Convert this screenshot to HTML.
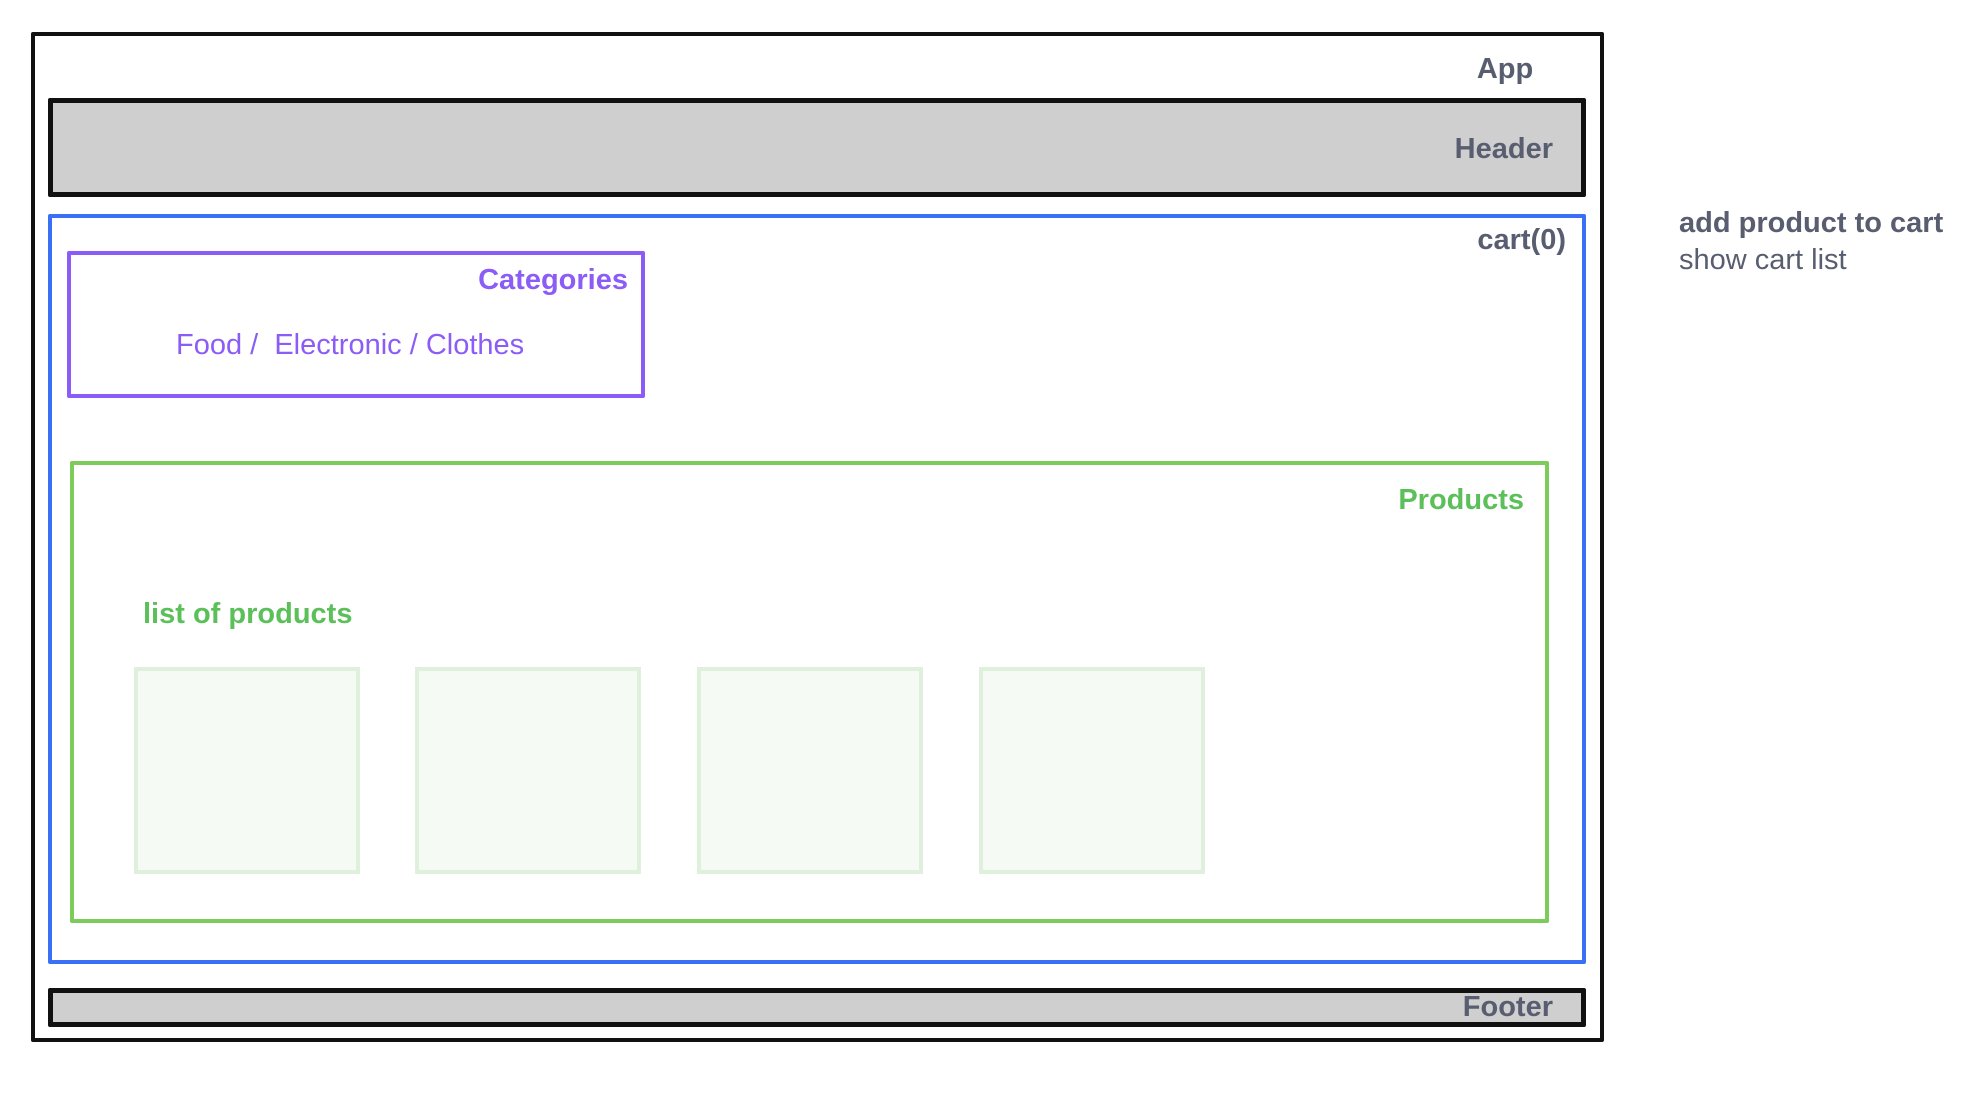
<!DOCTYPE html>
<html><head><meta charset="utf-8"><style>
html,body{margin:0;padding:0;background:#fff;width:1962px;height:1100px;overflow:hidden;position:relative;font-family:"Liberation Sans",sans-serif}
.b{position:absolute;box-sizing:border-box;border-radius:2px}
.t{position:absolute;white-space:nowrap;line-height:1;font-weight:bold;color:#585e70;font-size:29px}
.r{text-align:right}
.card{position:absolute;box-sizing:border-box;border:4px solid #dff0dc;background:#f6faf5;top:667px;height:207px;width:226px}
</style></head><body>
<div class="b" style="left:31px;top:32px;width:1573px;height:1010px;border:4px solid #111"></div>
<div class="t" style="left:1450px;width:110px;text-align:center;top:55px">App</div>
<div class="b" style="left:48px;top:98px;width:1538px;height:99px;border:5px solid #111;background:#cfcfcf"></div>
<div class="t r" style="right:409px;top:135px">Header</div>
<div class="b" style="left:48px;top:214px;width:1538px;height:750px;border:4px solid #3a70f5"></div>
<div class="t r" style="right:396px;top:226px">cart(0)</div>
<div class="b" style="left:67px;top:251px;width:578px;height:147px;border:4px solid #8b5cf6"></div>
<div class="t r" style="right:1334px;top:266px;color:#8b5cf6">Categories</div>
<div class="t" style="left:176px;top:331px;color:#8b5cf6;font-weight:normal">Food /&nbsp; Electronic / Clothes</div>
<div class="b" style="left:70px;top:461px;width:1479px;height:462px;border:4px solid #7dcb5b"></div>
<div class="t r" style="right:438px;top:486px;color:#5cc05a">Products</div>
<div class="t" style="left:143px;top:600px;color:#5cc05a">list of products</div>
<div class="card" style="left:134px"></div>
<div class="card" style="left:415px"></div>
<div class="card" style="left:697px"></div>
<div class="card" style="left:979px"></div>
<div class="b" style="left:48px;top:988px;width:1538px;height:39px;border:5px solid #111;background:#cfcfcf"></div>
<div class="t r" style="right:409px;top:993px">Footer</div>
<div class="t" style="left:1679px;top:209px">add product to cart</div>
<div class="t" style="left:1679px;top:246px;font-weight:normal">show cart list</div>
</body></html>
